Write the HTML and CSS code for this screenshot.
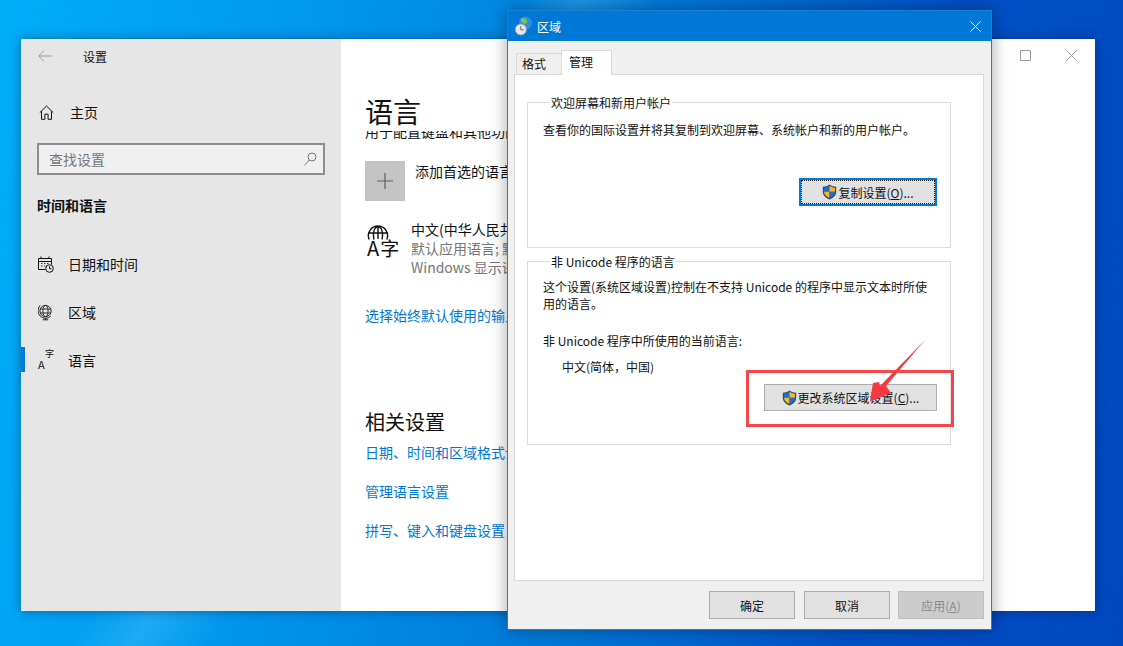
FILE: index.html
```html
<!DOCTYPE html>
<html lang="zh-CN">
<head>
<meta charset="utf-8">
<title>区域</title>
<link rel="stylesheet" href="styles.css">
</head>
<body>
<div class="desktop">
  <section class="settings">
    <aside class="sidebar">
      <div class="side-title">
        <svg class="back" width="14" height="12" viewBox="0 0 14 12"><path d="M6 .5.8 6 6 11.5M1 6h13" fill="none" stroke="#9a9a9a"/></svg>
        <span>设置</span>
      </div>
      <div class="home">
        <svg width="15" height="15" viewBox="0 0 15 15"><path d="M.8 7.6 7.5 1l6.7 6.6M2.5 6.3v8h3.4V9.2h3.2v5.1h3.4v-8" fill="none" stroke="#111"/></svg>
        <span>主页</span>
      </div>
      <div class="search">
        <span>查找设置</span>
        <svg width="13" height="14" viewBox="0 0 13 14"><circle cx="8" cy="5" r="4" fill="none" stroke="#777"/><path d="M5.2 8 .6 13.4" stroke="#777"/></svg>
      </div>
      <h2 class="side-head">时间和语言</h2>
      <nav class="nav">
        <a class="nav-item">
          <svg width="16" height="17" viewBox="0 0 16 17"><path d="M3 .5v2M11 .5v2M.5 2.5h13v3H.5zM.5 5.5v8h7M13.5 5.5v3" fill="none" stroke="#111"/><path d="M3 7.5h1.4M6 7.5h1.4M9 7.5h1.4M3 10h1.4M6 10h1.4" stroke="#333"/><circle cx="11.5" cy="12.5" r="3.8" fill="#e6e6e6" stroke="#111"/><path d="M11.5 10.2v2.5h2" fill="none" stroke="#111"/></svg>
          <span>日期和时间</span>
        </a>
        <a class="nav-item">
          <svg width="16" height="17" viewBox="0 0 16 17"><circle cx="7.5" cy="7" r="5.6" fill="none" stroke="#222"/><ellipse cx="7.5" cy="7" rx="2.6" ry="5.6" fill="none" stroke="#333"/><path d="M2 5h11M2 9h11" stroke="#333"/><path d="M2.2 1.5a7.4 7.4 0 0 0 10.6 10.6M7.5 14v1.6M4.8 15.8h5.4" fill="none" stroke="#222"/></svg>
          <span>区域</span>
        </a>
        <a class="nav-item active">
          <span class="lang-small"><b>A</b><i>字</i></span>
          <span>语言</span>
        </a>
      </nav>
    </aside>
    <main class="main">
      <div class="winctl">
        <svg width="11" height="11" viewBox="0 0 11 11"><path d="M.5.5h10v10H.5z" fill="none" stroke="#999"/></svg>
        <svg width="11" height="11" viewBox="0 0 11 11"><path d="m.5.5 10 10M10.5.5l-10 10" stroke="#999"/></svg>
      </div>
      <h1 class="page-title">语言</h1>
      <div class="scroll">
        <p class="cut">用于配置键盘和其他功能</p>
        <div class="add-row">
          <span class="plus"><svg width="16" height="16" viewBox="0 0 16 16"><path d="M8 0v16M0 8h16" stroke="#5c5c5c" stroke-width="1.2"/></svg></span>
          <span class="add-text">添加首选的语言</span>
        </div>
        <div class="lang-row">
          <span class="lang-big">
            <svg width="22" height="15" viewBox="0 0 22 15"><path d="M2.2 14.5a9.6 9.6 0 1 1 17.6 0M1 8h20M7 14.500C5.500 7 7 3 11 1.200c4 1.800 5.500 5.800 4 13.300M11 1v13" fill="none" stroke="#111" stroke-width="1.400"/></svg>
            <span class="lang-glyphs"><b>A</b><i>字</i></span>
          </span>
          <div class="lang-text">
            <div>中文(中华人民共和国)</div>
            <div class="muted">默认应用语言; 默认输入语言</div>
            <div class="muted">Windows 显示语言</div>
          </div>
        </div>
        <a class="link first">选择始终默认使用的输入法</a>
        <h2 class="related">相关设置</h2>
        <a class="link">日期、时间和区域格式设置</a>
        <a class="link">管理语言设置</a>
        <a class="link">拼写、键入和键盘设置</a>
      </div>
    </main>
  </section>

  <section class="dialog">
    <header class="titlebar">
      <svg class="dlg-icon" width="18" height="20" viewBox="0 0 18 20"><circle cx="10.500" cy="7" r="6.500" fill="#2f8fd8"/><path d="M6 2.500c3-1.500 5 0 6 2s-1 4-3 3-4-2-3-5z" fill="#7cc35a"/><circle cx="5.800" cy="13.500" r="5.500" fill="#e8e8e8" stroke="#9aa7b0"/><path d="M5.800 10v3.800h3" fill="none" stroke="#666"/></svg>
      <span class="dlg-title">区域</span>
      <svg class="dlg-close" width="11" height="11" viewBox="0 0 11 11"><path d="m.5.500 10 10M10.500.500l-10 10" stroke="#fff"/></svg>
    </header>
    <div class="dlg-body">
      <div class="tabs">
        <span class="tab">格式</span>
        <span class="tab current">管理</span>
      </div>
      <div class="pane">
        <fieldset class="group g1">
          <legend>欢迎屏幕和新用户帐户</legend>
          <p class="g1-text">查看你的国际设置并将其复制到欢迎屏幕、系统帐户和新的用户帐户。</p>
          <div class="btn-line g1-line">
            <button class="btn shield-btn focus">
              <svg class="shield" width="15" height="16" viewBox="0 0 15 16"><path d="M7.500.5C5.500 2 3 2.700.8 2.700v5C.8 11.500 4 14.300 7.500 15.500c3.500-1.200 6.700-4 6.700-7.800v-5C12 2.700 9.500 2 7.500.5z" fill="#3a4a5c"/><path d="M7.500 1.800v6H2v-4c2 0 3.800-.8 5.500-2z" fill="#1f6fd0"/><path d="M7.500 1.800v6H13v-4c-2 0-3.800-.8-5.500-2zM7.500 7.800V14C5 13 2.300 11 2 7.800z" fill="#f4b62c"/><path d="M7.500 7.800H13C12.700 11 10 13 7.500 14z" fill="#1f6fd0"/></svg>
              <span>复制设置(<u>O</u>)...</span>
            </button>
          </div>
        </fieldset>
        <fieldset class="group g2">
          <legend>非 Unicode 程序的语言</legend>
          <p class="g2-text">这个设置(系统区域设置)控制在不支持 Unicode 的程序中显示文本时所使用的语言。</p>
          <p class="g2-label">非 Unicode 程序中所使用的当前语言:</p>
          <p class="g2-value">中文(简体，中国)</p>
          <div class="btn-line g2-line">
            <button class="btn shield-btn wide">
              <svg class="shield" width="15" height="16" viewBox="0 0 15 16"><path d="M7.500.5C5.500 2 3 2.700.8 2.700v5C.8 11.500 4 14.300 7.500 15.500c3.500-1.200 6.700-4 6.700-7.800v-5C12 2.700 9.500 2 7.500.5z" fill="#3a4a5c"/><path d="M7.500 1.800v6H2v-4c2 0 3.800-.8 5.500-2z" fill="#1f6fd0"/><path d="M7.500 1.800v6H13v-4c-2 0-3.800-.8-5.500-2zM7.500 7.800V14C5 13 2.300 11 2 7.800z" fill="#f4b62c"/><path d="M7.500 7.800H13C12.700 11 10 13 7.500 14z" fill="#1f6fd0"/></svg>
              <span>更改系统区域设置(<u>C</u>)...</span>
            </button>
          </div>
        </fieldset>
      </div>
      <div class="actions">
        <button class="btn act">确定</button>
        <button class="btn act">取消</button>
        <button class="btn act disabled">应用(<u>A</u>)</button>
      </div>
    </div>
  </section>

  <div class="red-box"></div>
  <svg class="red-arrow" width="60" height="66" viewBox="0 0 60 66"><polygon points="55,0 16,46 21,53 4,60 0,61 3,43 9,42 10,46" fill="#f5393f"/></svg>
</div>
</body>
</html>
```

FILE: styles.css
```css
* { box-sizing: border-box; }
html, body { margin: 0; padding: 0; }
body { font-family: "Noto Sans CJK SC", "Noto Sans", sans-serif; color: #111; }

.desktop {
  position: relative;
  width: 1123px;
  height: 646px;
  overflow: hidden;
  background:
    linear-gradient(125deg, rgba(255,255,255,0) 33%, rgba(120,210,255,.25) 37%, rgba(255,255,255,0) 42%),
    linear-gradient(100deg, #00aef8 0%, #0099ee 25%, #0078d8 55%, #0050c6 78%, #0048c0 100%);
}

/* settings window */
.settings {
  position: absolute;
  left: 21px;
  top: 39px;
  width: 1074px;
  height: 572px;
  display: flex;
  background: #fff;
  box-shadow: 0 0 10px rgba(0,20,60,.45);
}
.sidebar {
  width: 320px;
  flex: none;
  background: #e6e6e6;
  display: flex;
  flex-direction: column;
}
.side-title {
  height: 34px;
  padding-left: 17px;
  display: flex;
  align-items: center;
  font-size: 12px;
}
.side-title .back { margin-right: 31px; }
.home {
  margin-top: 21px;
  height: 36px;
  padding-left: 18px;
  display: flex;
  align-items: center;
  gap: 16px;
  font-size: 14px;
}
.search {
  margin: 13px 0 0 16px;
  width: 288px;
  height: 32px;
  border: 2px solid #8e8e8e;
  background: #f0f0f0;
  padding: 0 6px 0 10px;
  display: flex;
  align-items: center;
  justify-content: space-between;
  color: #767676;
  font-size: 14px;
}
.side-head {
  margin: 20px 0 0 16px;
  height: 20px;
  line-height: 20px;
  font-size: 14px;
  font-weight: 700;
}
.nav { margin-top: 25px; display: flex; flex-direction: column; }
.nav-item {
  position: relative;
  height: 48px;
  padding-left: 17px;
  display: flex;
  align-items: center;
  gap: 14px;
  font-size: 14px;
}
.nav-item > svg { flex: none; width: 16px; }
.nav-item.active::before {
  content: "";
  position: absolute;
  left: 0;
  top: 11px;
  width: 4px;
  height: 25px;
  background: #0078d7;
}
.lang-small {
  width: 16px;
  height: 16px;
  position: relative;
  flex: none;
}
.lang-small b { position: absolute; left: 0; bottom: -2px; font-size: 11px; line-height: 12px; font-weight: 400; }
.lang-small i { position: absolute; left: 7px; top: -3px; font-size: 9px; line-height: 10px; font-style: normal; }

.main {
  position: relative;
  flex: 1;
  min-width: 0;
  padding-left: 24px;
  display: flex;
  flex-direction: column;
  white-space: nowrap;
  overflow: hidden;
}
.winctl {
  position: absolute;
  right: 18px;
  top: 11px;
  display: flex;
  gap: 35px;
}
.page-title {
  margin: 52px 0 0;
  height: 40px;
  line-height: 40px;
  font-size: 28px;
  font-weight: 400;
}
.scroll { flex: 1; overflow: hidden; font-size: 14px; }
.cut { margin: -10px 0 0; height: 20px; line-height: 20px; }
.add-row { margin-top: 20px; display: flex; height: 40px; }
.plus {
  width: 40px;
  height: 40px;
  background: #c4c4c4;
  display: flex;
  align-items: center;
  justify-content: center;
}
.add-text { margin-left: 10px; line-height: 20px; }
.lang-row { margin-top: 19px; display: flex; }
.lang-big {
  width: 46px;
  flex: none;
  padding: 5px 0 0 2px;
  display: flex;
  flex-direction: column;
}
.lang-glyphs { display: flex; align-items: baseline; margin-top: -1px; color: #111; }
.lang-glyphs b { font-size: 20px; line-height: 18px; font-weight: 400; margin-right: 1px; }
.lang-glyphs i { font-size: 19px; line-height: 18px; font-style: normal; margin-top: -6px; }
.lang-text { line-height: 19px; }
.muted { color: #767676; }
.link { display: block; color: #0078d7; height: 39px; line-height: 20px; }
.link.first { margin-top: 28px; height: 20px; }
.related {
  margin: 84px 0 0;
  font-size: 20px;
  line-height: 26px;
  font-weight: 400;
  height: 27px;
}
.related + .link { margin-top: 6px; }

/* dialog */
.dialog {
  position: absolute;
  left: 507px;
  top: 10px;
  width: 485px;
  height: 620px;
  border: 1px solid #1b7fd2;
  background: #f0f0f0;
  display: flex;
  flex-direction: column;
  box-shadow: 0 0 16px rgba(0,0,0,.35);
  font-size: 12px;
}
.titlebar {
  height: 30px;
  flex: none;
  background: #0078d7;
  color: #fff;
  display: flex;
  align-items: center;
  padding: 0 10px 0 7px;
}
.dlg-title { margin-left: 4px; font-size: 12px; }
.dlg-close { margin-left: auto; }
.dlg-body {
  flex: 1;
  display: flex;
  flex-direction: column;
  padding: 9px 7px 0 6px;
  min-height: 0;
}
.tabs {
  height: 24px;
  padding-left: 2px;
  display: flex;
  align-items: flex-end;
  flex: none;
  position: relative;
  z-index: 1;
}
.tab {
  width: 46px;
  height: 21px;
  border: 1px solid #d9d9d9;
  border-bottom: 0;
  padding-left: 5px;
  line-height: 20px;
  background: #f0f0f0;
}
.tab.current {
  width: 51px;
  height: 25px;
  margin-bottom: -1px;
  background: #fff;
  padding-left: 7px;
  line-height: 21px;
  margin-left: -1px;
}
.pane {
  height: 507px;
  flex: none;
  background: #fff;
  border: 1px solid #d9d9d9;
  padding: 19px 30px 0 12px;
}
.group {
  margin: 0;
  width: 424px;
  min-width: 0;
  border: 1px solid #dcdcdc;
  padding: 0 13px 0 15px;
}
.group legend {
  margin-left: 7px;
  padding: 0 1px;
  line-height: 17px;
  font-size: 12px;
}
.group p { margin: 0; line-height: 17px; }
.g1 { height: 154px; }
.g2 { height: 192px; margin-top: 5px; }
.g1-text { padding-top: 10px; }
.btn-line { display: flex; justify-content: flex-end; }
.g1-line { margin-top: 40px; }
.g2-text { padding-top: 8px; }
.g2-label { margin-top: 20px !important; }
.g2-value { margin: 9px 0 0 19px !important; }
.g2-line { margin-top: 9px; }
.btn {
  font: inherit;
  color: #111;
  background: #e1e1e1;
  border: 1px solid #adadad;
  padding: 0;
  display: flex;
  align-items: center;
  justify-content: center;
}
.shield-btn { height: 28px; width: 138px; gap: 1px; }
.shield-btn.wide { width: 173px; height: 27px; }
.shield { flex: none; }
.focus {
  border: 2px solid #0078d7;
  outline: 1px dotted #111;
  outline-offset: -3px;
}
.actions {
  display: flex;
  justify-content: flex-end;
  gap: 9px;
  margin-top: 10px;
  padding-right: 0;
}
.act { width: 86px; height: 28px; }
.act + .act.disabled { margin-left: -1px; }
.disabled { background: #cccccc; border-color: #bfbfbf; color: #8a8a8a; }

/* annotation */
.red-box {
  position: absolute;
  left: 746px;
  top: 370px;
  width: 208px;
  height: 57px;
  border: 3px solid #f5474a;
}
.red-arrow {
  position: absolute;
  left: 870px;
  top: 340px;
}
```
